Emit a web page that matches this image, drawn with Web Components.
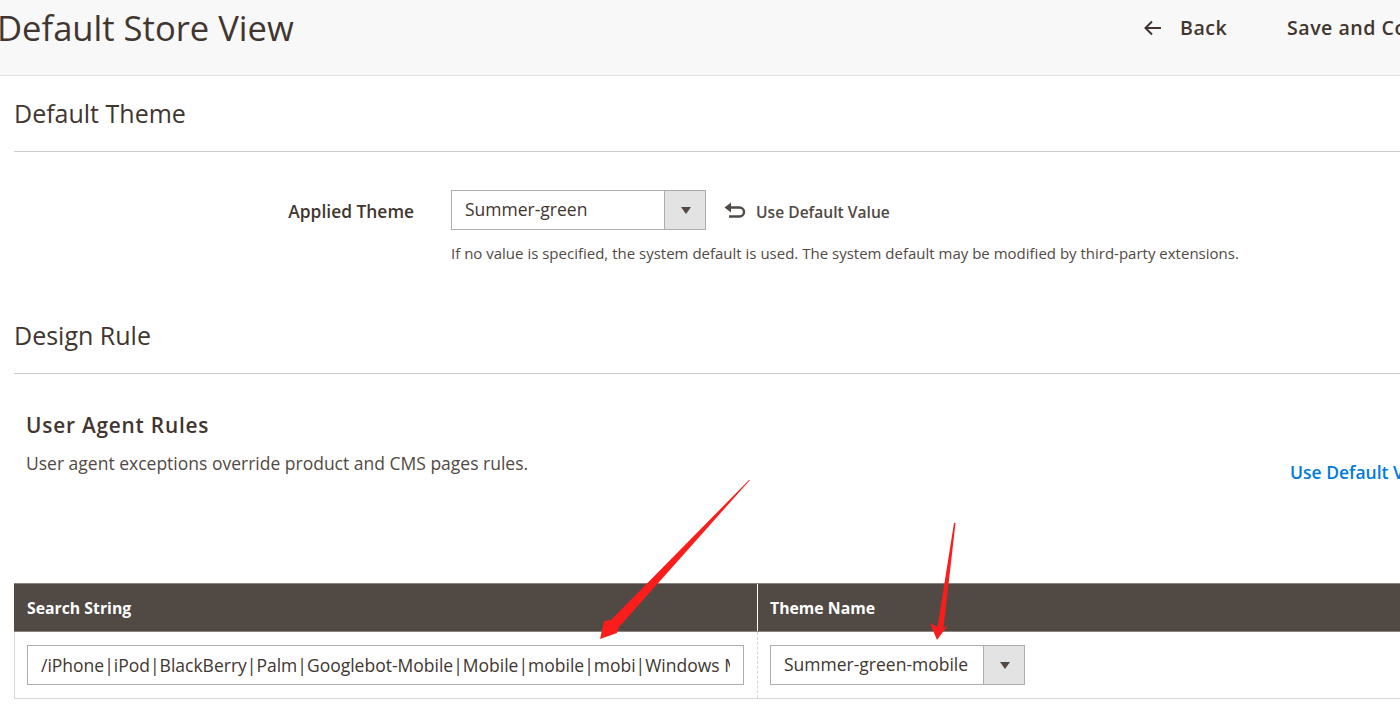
<!DOCTYPE html>
<html lang="en">
<head>
<meta charset="utf-8">
<title>Default Store View</title>
<style>
  html, body { margin: 0; padding: 0; height: 100%; overflow: hidden; background: #fff; }
  body { font-family: "Open Sans", "Liberation Sans", sans-serif; color: #41362f; }
  theme-page { width: 1700px; }
</style>
</head>
<body>

<theme-page>
  <page-header slot="header" title="Default Store View"></page-header>

  <section-title>Default Theme</section-title>
  <theme-field label="Applied Theme" value="Summer-green">
    If no value is specified, the system default is used. The system default may be modified by third-party extensions.
  </theme-field>

  <section-title>Design Rule</section-title>
  <agent-rules></agent-rules>

  <rules-table value="/iPhone|iPod|BlackBerry|Palm|Googlebot-Mobile|Mobile|mobile|mobi|Windows Mo" theme="Summer-green-mobile"></rules-table>

  <red-arrows></red-arrows>
</theme-page>

<script>
class ThemePage extends HTMLElement {
  constructor() {
    super();
    this.attachShadow({ mode: 'open' });
    this.shadowRoot.innerHTML = `
      <style>
        :host { display: block; position: relative; }
        .content { display: flex; flex-direction: column; padding-left: 14px; }
      </style>
      <slot name="header"></slot>
      <div class="content"><slot></slot></div>
    `;
  }
}

class PageHeader extends HTMLElement {
  constructor() {
    super();
    this.attachShadow({ mode: 'open' });
    this.shadowRoot.innerHTML = `
      <style>
        :host { display: block; }
        .bar {
          display: flex;
          height: 75px;
          background: #f8f8f8;
          border-bottom: 1px solid #e3e3e3;
          align-items: flex-start;
          white-space: nowrap;
        }
        h1 {
          margin: 0 0 0 -3px;
          width: 1146px;
          flex: none;
          font-size: 34.6px;
          line-height: 55px;
          font-weight: 400;
          color: #41362f;
        }
        .action {
          display: flex;
          align-items: center;
          height: 55px;
          font-size: 19.6px;
          font-weight: 600;
          letter-spacing: .5px;
          color: #41362f;
        }
        .back { width: 144px; flex: none; }
        svg { width: 20px; height: 18px; margin-right: 17px; }
      </style>
      <div class="bar">
        <h1></h1>
        <div class="action back">
          <svg viewBox="0 0 20 18" fill="none" stroke="#41362f" stroke-width="2">
            <path d="M18 9H2.5M9 2.5 2.5 9 9 15.5"/>
          </svg>
          Back
        </div>
        <div class="action">Save and Continue</div>
      </div>
    `;
  }

  connectedCallback() {
    this.shadowRoot.querySelector('h1').textContent = this.getAttribute('title');
  }
}

class SectionTitle extends HTMLElement {
  constructor() {
    super();
    this.attachShadow({ mode: 'open' });
    this.shadowRoot.innerHTML = `
      <style>
        :host {
          display: flex;
          align-items: center;
          box-sizing: content-box;
          height: 73px;
          padding-bottom: 2px;
          border-bottom: 1px solid #cccccc;
          font-size: 25px;
          font-weight: 400;
          color: #41362f;
        }
      </style>
      <slot></slot>
    `;
  }
}

class ThemeSelect extends HTMLElement {
  static get observedAttributes() { return ['value']; }

  constructor() {
    super();
    this.attachShadow({ mode: 'open' });
    this.shadowRoot.innerHTML = `
      <style>
        :host {
          display: flex;
          box-sizing: border-box;
          width: 255px;
          height: 40px;
          flex: none;
          border: 1px solid #adadad;
          background: #fff;
          font-size: 17.5px;
          color: #41362f;
        }
        .value { flex: 1; padding-left: 13px; line-height: 37px; white-space: nowrap; overflow: hidden; }
        .toggle {
          width: 41px;
          box-sizing: border-box;
          flex: none;
          display: flex;
          align-items: center;
          justify-content: center;
          background: #e3e3e3;
          border-left: 1px solid #adadad;
        }
        .caret {
          width: 0;
          height: 0;
          margin: 1px 0 0 1px;
          border-left: 5.5px solid transparent;
          border-right: 5.5px solid transparent;
          border-top: 7px solid #514943;
        }
      </style>
      <div class="value"></div>
      <div class="toggle"><span class="caret"></span></div>
    `;
  }

  attributeChangedCallback(name, oldValue, newValue) {
    this.shadowRoot.querySelector('.value').textContent = newValue;
  }
}

class ThemeField extends HTMLElement {
  constructor() {
    super();
    this.attachShadow({ mode: 'open' });
    this.shadowRoot.innerHTML = `
      <style>
        :host {
          display: grid;
          grid-template-columns: 400px 1fr;
          grid-template-rows: 40px auto;
          align-content: start;
          column-gap: 37px;
          padding: 38px 0 0;
          height: 146px;
          box-sizing: border-box;
        }
        label {
          text-align: right;
          font-size: 17.4px;
          font-weight: 600;
          line-height: 42px;
          color: #41362f;
        }
        .control { display: flex; align-items: center; }
        .default {
          display: flex;
          align-items: center;
          margin-left: 18px;
          padding-top: 3px;
          font-size: 15.6px;
          font-weight: 600;
          color: #514943;
        }
        svg { width: 23px; height: 18px; margin-right: 9px; margin-top: -3px; }
        .hint {
          grid-column: 2;
          margin-top: 13px;
          font-size: 15px;
          line-height: 20px;
          color: #514943;
        }
      </style>
      <label></label>
      <div class="control">
        <theme-select></theme-select>
        <div class="default">
          <svg viewBox="0 0 23 18">
            <path d="M3 6.5H15.5a4.5 4.5 0 0 1 0 9H5" fill="none" stroke="#514943" stroke-width="2.4"/>
            <path d="M0.5 6.5 7 1.5v10z" fill="#514943"/>
          </svg>
          Use Default Value
        </div>
      </div>
      <div class="hint"><slot></slot></div>
    `;
  }

  connectedCallback() {
    this.shadowRoot.querySelector('label').textContent = this.getAttribute('label');
    this.shadowRoot.querySelector('theme-select').setAttribute('value', this.getAttribute('value'));
  }
}

class AgentRules extends HTMLElement {
  constructor() {
    super();
    this.attachShadow({ mode: 'open' });
    this.shadowRoot.innerHTML = `
      <style>
        :host {
          display: grid;
          grid-template-columns: 1264px auto;
          height: 209px;
          box-sizing: border-box;
          padding: 36px 0 0 12px;
          white-space: nowrap;
        }
        h3 {
          margin: 0;
          font-size: 20.8px;
          line-height: 30px;
          font-weight: 600;
          letter-spacing: .8px;
          color: #41362f;
        }
        p { margin: 12px 0 0; font-size: 17.5px; line-height: 22px; color: #514943; }
        a { margin-top: 50px; font-size: 17.5px; line-height: 24px; font-weight: 600; color: #007bdb; text-decoration: none; }
      </style>
      <div>
        <h3>User Agent Rules</h3>
        <p>User agent exceptions override product and CMS pages rules.</p>
      </div>
      <a href="#">Use Default Value</a>
    `;
  }
}

class RulesTable extends HTMLElement {
  constructor() {
    super();
    this.attachShadow({ mode: 'open' });
    this.shadowRoot.innerHTML = `
      <style>
        :host { display: block; }
        .row { display: grid; grid-template-columns: 743px 1fr; }
        .head {
          height: 49px;
          box-sizing: border-box;
          background: #514943;
          border-top: 1px solid #8a837e;
          border-bottom: 1px solid #8a837e;
          color: #fff;
          font-size: 15.8px;
          font-weight: 700;
        }
        .head div { display: flex; align-items: center; padding-left: 13px; }
        .head div + div { border-left: 1px solid #fff; padding-left: 12px; }
        .body {
          grid-template-columns: 742px 1fr;
          height: 67px;
          box-sizing: border-box;
          border-left: 1px solid #d6d6d6;
          border-bottom: 1px solid #d6d6d6;
        }
        .body > div { padding: 13px 0 0 12px; box-sizing: border-box; }
        .body > div + div { border-left: 1px dashed #d6d6d6; }
        .input {
          box-sizing: border-box;
          width: 717px;
          height: 40px;
          padding: 0 13px;
          border: 1px solid #adadad;
          font-size: 17.5px;
          line-height: 38px;
          color: #41362f;
        }
        .clip { display: block; overflow: hidden; white-space: nowrap; }
      </style>
      <div class="row head"><div>Search String</div><div>Theme Name</div></div>
      <div class="row body">
        <div><div class="input"><span class="clip"></span></div></div>
        <div><theme-select></theme-select></div>
      </div>
    `;
  }

  connectedCallback() {
    this.shadowRoot.querySelector('.clip').textContent = this.getAttribute('value');
    this.shadowRoot.querySelector('theme-select').setAttribute('value', this.getAttribute('theme'));
  }
}

// the two red marks drawn over the screenshot
class RedArrows extends HTMLElement {
  constructor() {
    super();
    this.attachShadow({ mode: 'open' });
    this.shadowRoot.innerHTML = `
      <style>
        :host { position: absolute; left: 0; top: 0; width: 1400px; height: 710px; pointer-events: none; }
        svg { display: block; }
      </style>
      <svg width="1400" height="710" viewBox="0 0 1400 710" fill="#fb1c1c">
        <polygon points="750,480 749,480 611,620 604,621 600,639 617,633 619,627"/>
        <polygon points="955.5,523 954,523 937.5,627 930,623 937,640 948,625 943.5,628"/>
      </svg>
    `;
  }
}

customElements.define('theme-page', ThemePage);
customElements.define('page-header', PageHeader);
customElements.define('section-title', SectionTitle);
customElements.define('theme-select', ThemeSelect);
customElements.define('theme-field', ThemeField);
customElements.define('agent-rules', AgentRules);
customElements.define('rules-table', RulesTable);
customElements.define('red-arrows', RedArrows);
</script>
</body>
</html>
